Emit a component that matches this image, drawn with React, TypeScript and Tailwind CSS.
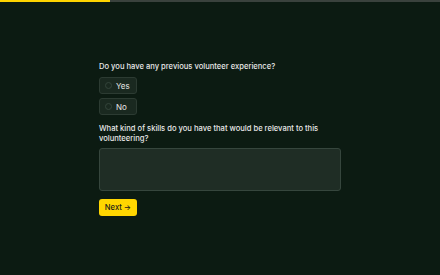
import React, { useState } from "react";

export default function App() {
  const [answer, setAnswer] = useState("");
  const [skills, setSkills] = useState("");

  return (
    <div
      className="min-h-[275px] w-full bg-[#0c1b12] text-[#e8e8e8]"
      style={{ fontFamily: "Inter, 'Noto Sans', sans-serif" }}
    >
      <div className="h-[2px] w-full bg-[#3a423d]">
        <div className="h-full w-[110px] bg-[#ffd400]"></div>
      </div>

      <div className="mx-auto w-[242px] pt-[60px]">
        <p className="text-[7.6px] font-medium leading-[10px]">
          Do you have any previous volunteer experience?
        </p>

        <div className="mt-[5px] flex flex-col gap-[4px]">
          {["Yes", "No"].map((opt) => (
            <button
              key={opt}
              onClick={() => setAnswer(opt)}
              className="flex h-[17px] w-[38px] items-center gap-[4px] rounded-[3px] border border-[#2c3b32] bg-[#1a2920] pl-[5px] text-[8px]"
            >
              <span
                className={
                  answer === opt
                    ? "h-[7px] w-[7px] rounded-full border border-[#ffd400] bg-[#ffd400]"
                    : "h-[7px] w-[7px] rounded-full border border-[#34453b]"
                }
              ></span>
              {opt}
            </button>
          ))}
        </div>

        <p className="mt-[9px] text-[7.6px] font-medium leading-[10px]">
          What kind of skills do you have that would be relevant to this
          volunteering?
        </p>

        <textarea
          value={skills}
          onChange={(e) => setSkills(e.target.value)}
          className="mt-[4px] block h-[43px] w-full resize-none rounded-[3px] border border-[#36463d] bg-[#1f2d25] p-1 text-[8px] outline-none"
        ></textarea>

        <button className="mt-[8px] flex h-[17px] w-[38px] items-center justify-center rounded-[3px] bg-[#ffd600] text-[7.6px] font-medium text-[#1a1a1a]">
          Next →
        </button>
      </div>
    </div>
  );
}
